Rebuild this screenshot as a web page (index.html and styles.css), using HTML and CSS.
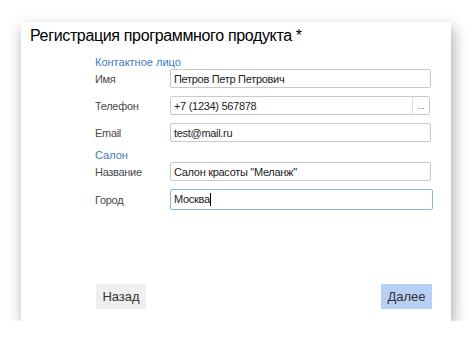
FILE: index.html
```html
<!DOCTYPE html>
<html lang="ru">
<head>
    <meta charset="UTF-8">
    <title>Регистрация программного продукта</title>
    <link rel="stylesheet" href="styles.css">
</head>
<body>

<div class="window">
    <h1 class="title">Регистрация программного продукта *</h1>

    <form class="form">
        <div class="section">Контактное лицо</div>
        <div class="row">
            <label for="name">Имя</label>
            <input type="text" id="name" value="Петров Петр Петрович">
        </div>
        <div class="row">
            <label for="phone">Телефон</label>
            <div class="field-group">
                <input type="text" id="phone" value="+7 (1234) 567878">
                <button type="button" class="pick">...</button>
            </div>
        </div>
        <div class="row">
            <label for="email">Email</label>
            <input type="text" id="email" value="test@mail.ru">
        </div>

        <div class="section">Салон</div>
        <div class="row">
            <label for="salon">Название</label>
            <input type="text" id="salon" value='Салон красоты "Меланж"'>
        </div>
        <div class="row">
            <label for="city">Город</label>
            <div class="input focused">Москва<span class="caret"></span></div>
        </div>
    </form>

    <div class="buttons">
        <button type="button" class="btn back">Назад</button>
        <button type="button" class="btn next">Далее</button>
    </div>
</div>

</body>
</html>
```

FILE: styles.css
```css
body {
    margin: 0;
    padding: 22px 0 0 21px;
    background: #ffffff;
    font-family: Arial, "Liberation Sans", sans-serif;
    color: #333;
}

.window {
    width: 430px;
    height: 299px;
    background: #fff;
    box-shadow: 2px 6px 14px rgba(0, 0, 0, 0.35);
    display: flex;
    flex-direction: column;
}

.title {
    margin: 0;
    padding: 1px 0 0 9px;
    font-size: 16px;
    letter-spacing: -0.35px;
    font-weight: normal;
    color: #000;
    height: 26px;
    line-height: 26px;
}

.form {
    padding: 6px 0 0 74px;
}

.section {
    color: #3b7cc4;
    font-size: 11px;
    height: 14px;
    line-height: 14px;
}

.row + .section {
    margin-top: -2px;
}

.row {
    display: flex;
    align-items: center;
    margin-bottom: 8px;
    font-size: 11px;
    letter-spacing: -0.3px;
}

.row label {
    width: 75px;
    color: #4a4a4a;
}

.row input, .input {
    box-sizing: border-box;
    width: 261px;
    height: 19px;
    padding: 0 3px;
    border: 1px solid #c9c9c9;
    border-radius: 2px;
    font-family: inherit;
    font-size: 11px;
    letter-spacing: -0.3px;
    color: #222;
    line-height: 17px;
    outline: none;
}

.field-group {
    display: flex;
    width: 261px;
}

.field-group input {
    width: 243px;
    border-radius: 2px 0 0 2px;
}

.pick {
    width: 18px;
    height: 19px;
    padding: 0;
    border: 1px solid #c9c9c9;
    border-left-color: #dcdcdc;
    border-radius: 0 2px 2px 0;
    margin-left: -1px;
    background: #fff;
    font-size: 9px;
    color: #555;
    line-height: 12px;
}

.input.focused {
    width: 263px;
    height: 21px;
    border-color: #8db5e4;
    line-height: 19px;
}

.caret {
    display: inline-block;
    width: 1px;
    height: 13px;
    background: #000;
    vertical-align: -3px;
}

.buttons {
    margin-top: auto;
    margin-bottom: 12px;
    display: flex;
    justify-content: space-between;
    padding: 0 19px 0 75px;
}

.btn {
    height: 25px;
    width: 50px;
    border: none;
    font-family: inherit;
    font-size: 13px;
    color: #333;
    padding: 0;
}

.back {
    background: #efefef;
}

.next {
    width: 51px;
    background: #b8d0f5;
}
```
